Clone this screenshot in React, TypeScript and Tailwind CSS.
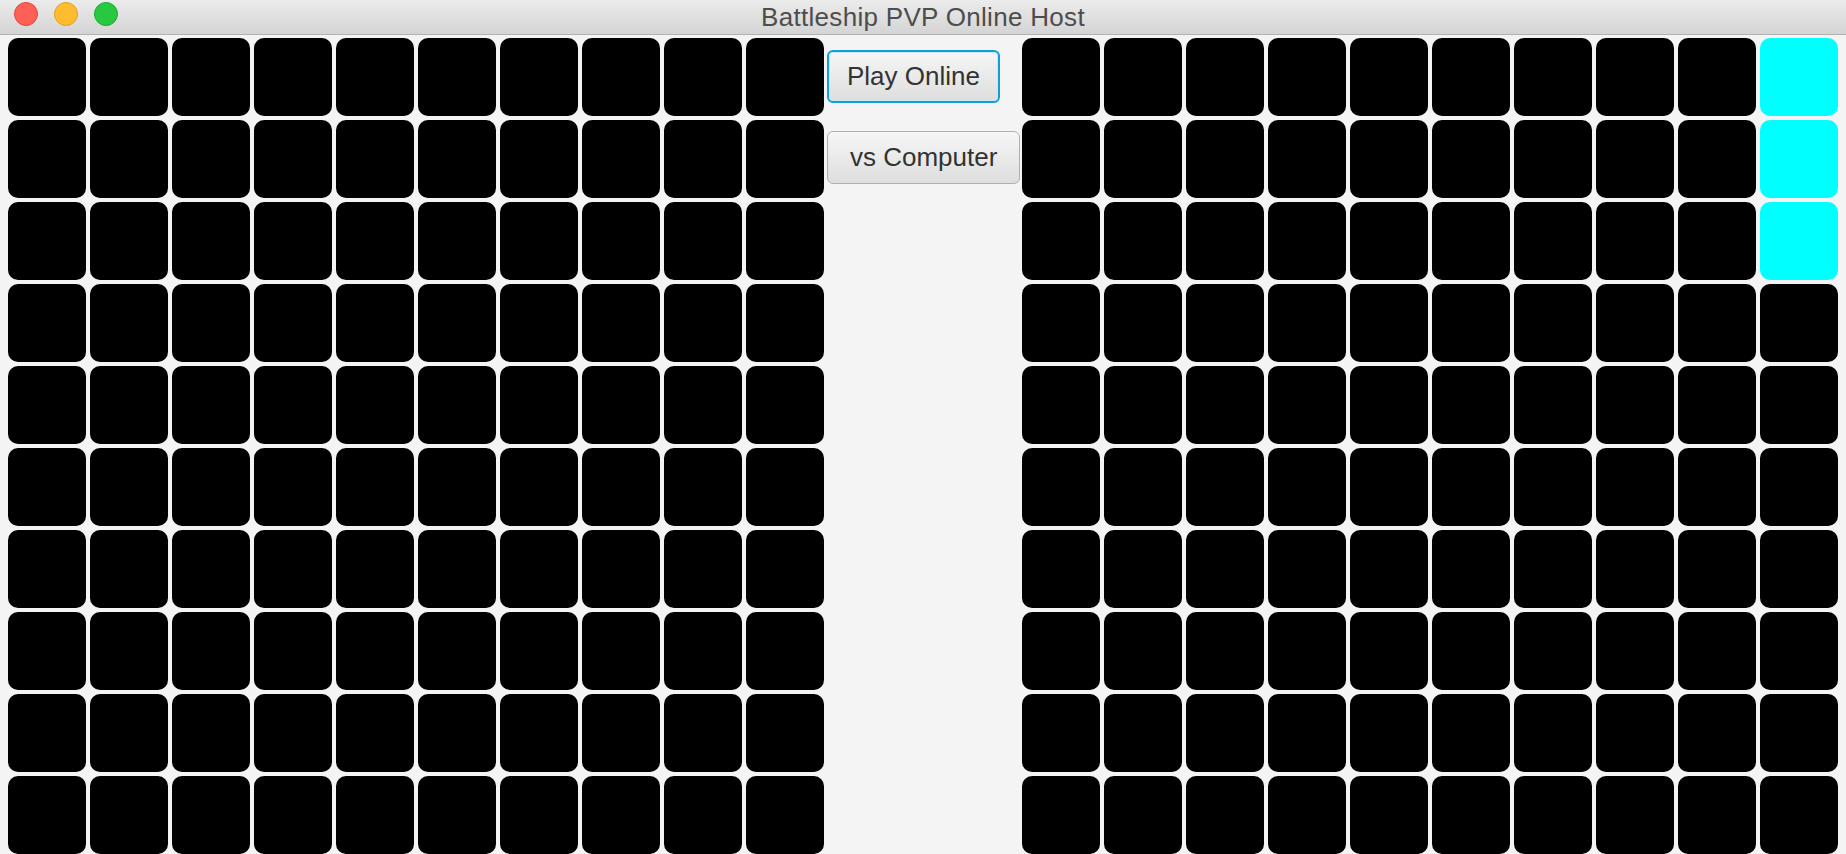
const cells = Array.from({ length: 100 }, (_, i) => i);

function Board({ hits = [] as number[] }) {
  return (
    <div className="grid grid-cols-[repeat(10,78px)] grid-rows-[repeat(10,78px)] gap-[4px]">
      {cells.map((i) => (
        <div
          key={i}
          className={hits.includes(i) ? "rounded-[10px] bg-[#00ffff]" : "rounded-[10px] bg-black"}
        />
      ))}
    </div>
  );
}

export default function App() {
  return (
    <div className="flex h-[854px] w-[1846px] flex-col overflow-hidden bg-[#f4f4f4] font-['Liberation_Sans',Arial,sans-serif]">
      <header className="relative flex h-[35px] shrink-0 items-center justify-center border-b border-[#b1b1b1] bg-gradient-to-b from-[#ececec] to-[#d4d4d4]">
        <div className="absolute left-[14px] top-[2px] flex gap-[16px]">
          <span className="h-[24px] w-[24px] rounded-full border border-[#e2463f] bg-[#fe5f57]" />
          <span className="h-[24px] w-[24px] rounded-full border border-[#dfa023] bg-[#febc2e]" />
          <span className="h-[24px] w-[24px] rounded-full border border-[#1aab29] bg-[#28c840]" />
        </div>
        <div className="text-[26px] leading-[30px] tracking-[0.3px] text-[#4d4d4d]">Battleship PVP Online Host</div>
      </header>

      <main className="flex pl-[8px] pt-[3px]">
        <Board />

        <div className="flex w-[198px] flex-col items-start gap-[28px] pl-[3px] pt-[12px]">
          <button className="h-[53px] rounded-[6px] border-2 border-[#10a0d8] bg-gradient-to-b from-[#f6f6f6] to-[#dedede] px-[18px] text-[26px] text-[#333] shadow-[inset_0_0_0_1px_#cde7f2]">
            Play Online
          </button>
          <button className="h-[53px] rounded-[6px] border border-[#b0b0b0] bg-gradient-to-b from-[#f6f6f6] to-[#dedede] px-[22px] text-[26px] text-[#333]">
            vs Computer
          </button>
        </div>

        <Board hits={[9, 19, 29]} />
      </main>
    </div>
  );
}
